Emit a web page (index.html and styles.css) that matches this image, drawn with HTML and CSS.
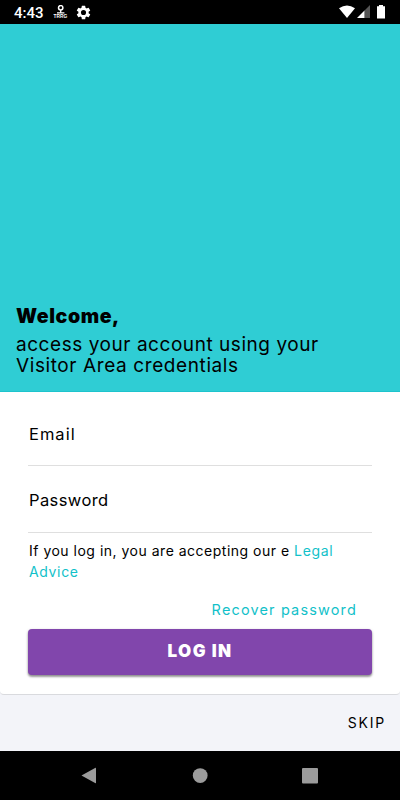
FILE: index.html
```html
<!DOCTYPE html>
<html lang="en">
<head>
<meta charset="utf-8">
<title>Log in</title>
<link rel="stylesheet" href="styles.css">
</head>
<body>
<div class="screen">
  <header class="status">
    <span class="clock">4:43</span>
    <svg class="pin" width="15" height="15" viewBox="0 0 15 15"><circle cx="7.7" cy="2.8" r="2.2" fill="none" stroke="#fff" stroke-width="1.5"/><path d="M7.7 5v3M4 7.8h7.4" stroke="#fff" stroke-width="1.3"/><text class="tiny" x="0.6" y="13.2" textLength="13.6" lengthAdjust="spacingAndGlyphs">TRRG</text></svg>
    <svg class="gear" width="15" height="15" viewBox="1.5 1.5 21 21"><path fill="#fff" d="M19.14 12.94c.04-.3.06-.61.06-.94s-.02-.64-.07-.94l2.03-1.58a.49.49 0 0 0 .12-.61l-1.92-3.32a.49.49 0 0 0-.59-.22l-2.39.96c-.5-.38-1.03-.7-1.62-.94l-.36-2.54a.48.48 0 0 0-.48-.41h-3.84a.47.47 0 0 0-.47.41l-.36 2.54c-.59.24-1.13.57-1.62.94l-2.39-.96a.48.48 0 0 0-.59.22L2.74 8.87a.48.48 0 0 0 .12.61l2.03 1.58a6 6 0 0 0 0 1.88l-2.03 1.58a.49.49 0 0 0-.12.61l1.92 3.32c.12.22.37.29.59.22l2.39-.96c.5.38 1.03.7 1.62.94l.36 2.54c.05.24.24.41.48.41h3.84c.24 0 .44-.17.47-.41l.36-2.54c.59-.24 1.13-.56 1.62-.94l2.39.96c.22.08.47 0 .59-.22l1.92-3.32a.48.48 0 0 0-.12-.61zM12 15.6a3.6 3.6 0 1 1 0-7.2 3.6 3.6 0 0 1 0 7.2z"/></svg>
    <svg class="signals" width="47" height="14" viewBox="0 0 47 14"><path fill="#fff" d="M0 3.2Q8-2.2 16 3.2L8 13z"/><path fill="#555" d="M25.5 5.5L31 0v13h-5.5z"/><path fill="#fff" d="M18 13l7.5-7.5V13z"/><path fill="#fff" d="M38 1.2h2V0h4v1.2h2V13.5h-8z"/></svg>
  </header>
  <section class="hero">
    <h1>Welcome,</h1>
    <p><span class="l1">access your account using your</span><br><span class="l2">Visitor Area credentials</span></p>
  </section>
  <main class="card">
    <div class="field"><span class="email">Email</span></div>
    <div class="field second"><span class="password">Password</span></div>
    <p class="terms">If you log in, you are accepting our e <a>Legal<br>Advice</a></p>
    <div class="recover"><a>Recover password</a></div>
    <button class="login" type="button"><span>LOG IN</span></button>
  </main>
  <footer class="skip"><span>SKIP</span></footer>
  <nav class="nav">
    <svg width="400" height="49" viewBox="0 0 400 49"><g fill="#9b9b9b"><path d="M81.5 24.5L95.5 16.8q.5-.2.5.4v14.6q0 .6-.5.4z"/><circle cx="200.2" cy="24.6" r="7.4"/><rect x="302" y="17" width="16" height="15.6" rx="1"/></g></svg>
  </nav>
</div>
</body>
</html>
```
FILE: styles.css
```css
* { box-sizing: border-box; }
body { margin: 0; background: #f3f4f9; font-family: Inter, "Liberation Sans", sans-serif; color: #000; }
h1, p { margin: 0; font-weight: 400; }
.screen { width: 400px; height: 800px; display: flex; flex-direction: column; overflow: hidden; }
.status { height: 24px; background: #000; display: flex; align-items: center; padding: 0 14px 0 14px; flex: none; }
.clock { color: #fff; font: 500 15px/24px Roboto, sans-serif; width: 39px; padding-top: 2px; }
.pin { margin-top: 1px; }
.tiny { font: 700 5px "Liberation Sans", sans-serif; fill: #fff; }
.gear { margin: 1px 0 0 8px; }
.signals { margin: 0 0 0 auto; }
.hero { height: 368px; flex: none; background: #2fcdd4; border-bottom: 1px solid #1dc4cd; padding: 0 16px 15px; display: flex; flex-direction: column; justify-content: flex-end; white-space: nowrap; }
h1 { font-size: 19.5px; font-weight: 900; line-height: 24px; margin-bottom: 6px; letter-spacing: 0.6px; }
.hero p { font-size: 19px; line-height: 21px; }
.l1 { letter-spacing: 0.55px; }
.l2 { letter-spacing: 0.6px; }
.card { height: 303px; flex: none; background: #fff; padding: 20px 28px 0; border-bottom: 1px solid #d9dade; border-radius: 0 0 4px 4px; }
.field { height: 54px; border-bottom: 1px solid #dfdfdf; padding: 10px 0 0 1px; font-size: 16.5px; line-height: 24px; }
.second { height: 67px; padding-top: 22px; }
.email { letter-spacing: 1px; }
.password { letter-spacing: 0.4px; }
.terms { font-size: 14px; line-height: 21px; padding: 7px 0 1px 1px; letter-spacing: 0.5px; white-space: nowrap; }
.terms a { letter-spacing: 0.65px; }
.card a { color: #12c1c9; }
.recover { height: 46px; padding: 17px 15px 0 0; text-align: right; font-size: 14.5px; line-height: 20px; letter-spacing: 1.15px; }
.login { display: block; width: 344px; height: 46px; padding: 0 0 3px; border: 0; border-radius: 4px; background: #8146ac; color: #fff; font: 900 17px/20px Inter, sans-serif; letter-spacing: 1.4px; box-shadow: 0 2px 2px rgba(0,0,0,.3), 0 1px 3px rgba(0,0,0,.25); }
.skip { height: 56px; flex: none; padding: 18px 14px 0; text-align: right; font-size: 14px; line-height: 20px; letter-spacing: 1.8px; }
.nav { height: 49px; flex: none; background: #000; }
.nav svg { display: block; }
```
